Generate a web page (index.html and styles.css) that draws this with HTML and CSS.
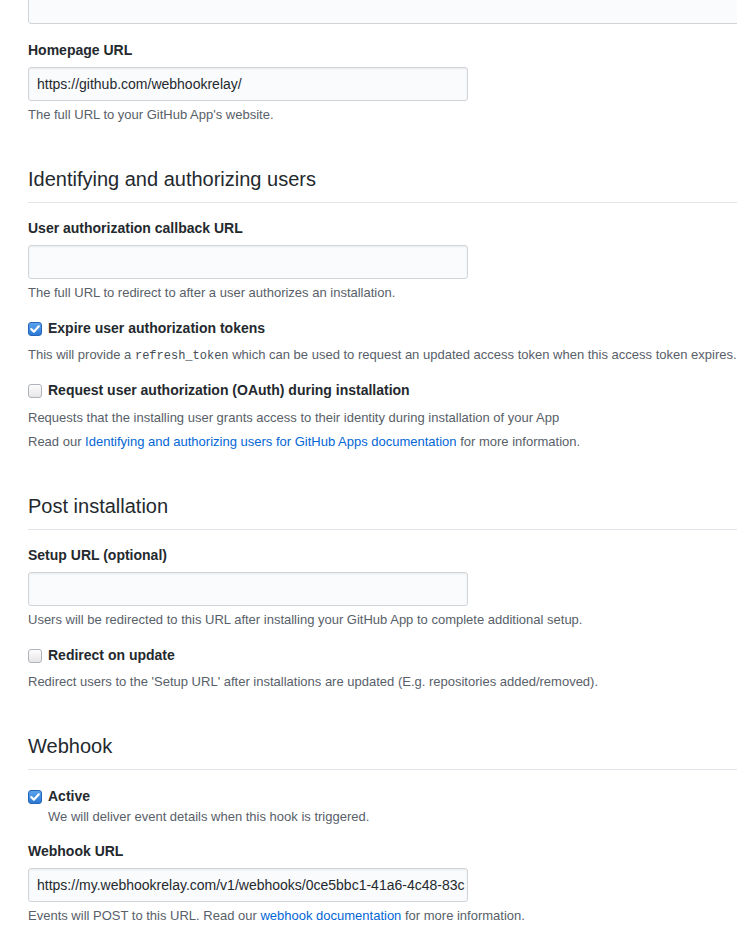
FILE: index.html
```html
<!DOCTYPE html>
<html lang="en">
<head>
<meta charset="utf-8">
<title>GitHub App settings</title>
<link rel="stylesheet" href="styles.css">
</head>
<body>
<div class="page">
  <div class="textarea-stub"></div>

  <div class="form-group first">
    <div class="label">Homepage URL</div>
    <div class="input">https://github.com/webhookrelay/</div>
    <p class="note">The full URL to your GitHub App's website.</p>
  </div>

  <h2 class="subhead">Identifying and authorizing users</h2>

  <div class="form-group">
    <div class="label">User authorization callback URL</div>
    <div class="input"></div>
    <p class="note">The full URL to redirect to after a user authorizes an installation.</p>
  </div>

  <div class="check-group">
    <div class="check-label"><span class="cb checked"><svg viewBox="0 0 14 14" width="14" height="14"><path d="M3.3 7.1 L5.9 9.7 L10.8 4.3" fill="none" stroke="#fff" stroke-width="2.2" stroke-linecap="round" stroke-linejoin="round"/></svg></span>Expire user authorization tokens</div>
    <p class="note">This will provide a <code>refresh_token</code> which can be used to request an updated access token when this access token expires.</p>
  </div>

  <div class="check-group stacked">
    <div class="check-label"><span class="cb"></span>Request user authorization (OAuth) during installation</div>
    <p class="note">Requests that the installing user grants access to their identity during installation of your App</p>
    <p class="note">Read our <a href="#">Identifying and authorizing users for GitHub Apps documentation</a> for more information.</p>
  </div>

  <h2 class="subhead">Post installation</h2>

  <div class="form-group">
    <div class="label">Setup URL (optional)</div>
    <div class="input"></div>
    <p class="note">Users will be redirected to this URL after installing your GitHub App to complete additional setup.</p>
  </div>

  <div class="check-group">
    <div class="check-label"><span class="cb"></span>Redirect on update</div>
    <p class="note">Redirect users to the 'Setup URL' after installations are updated (E.g. repositories added/removed).</p>
  </div>

  <h2 class="subhead">Webhook</h2>

  <div class="check-group tight">
    <div class="check-label"><span class="cb checked"><svg viewBox="0 0 14 14" width="14" height="14"><path d="M3.3 7.1 L5.9 9.7 L10.8 4.3" fill="none" stroke="#fff" stroke-width="2.2" stroke-linecap="round" stroke-linejoin="round"/></svg></span>Active</div>
    <p class="note indent">We will deliver event details when this hook is triggered.</p>
  </div>

  <div class="form-group after-check">
    <div class="label">Webhook URL</div>
    <div class="input">https://my.webhookrelay.com/v1/webhooks/0ce5bbc1-41a6-4c48-83c</div>
    <p class="note">Events will POST to this URL. Read our <a href="#">webhook documentation</a> for more information.</p>
  </div>
</div>
</body>
</html>
```

FILE: styles.css
```css
html, body {
  margin: 0;
  padding: 0;
  overflow: hidden;
  background: #fff;
}
body {
  font-family: "Liberation Sans", Arial, sans-serif;
  color: #24292e;
  font-size: 14px;
  line-height: 1.5;
}
.page {
  width: 760px;
  padding-left: 28px;
}
.textarea-stub {
  width: 760px;
  height: 60px;
  margin-top: -36px;
  box-sizing: border-box;
  background: #fafbfc;
  border: 1px solid #d1d5da;
  border-radius: 3px;
}
.form-group {
  margin-top: 15px;
}
.form-group.first {
  margin-top: 16px;
}
.form-group.after-check {
  margin-top: 14px;
}
.label {
  font-weight: bold;
  font-size: 14px;
  line-height: 21px;
  margin-bottom: 6px;
}
.input {
  width: 440px;
  height: 34px;
  box-sizing: border-box;
  background: #fafbfc;
  border: 1px solid #d1d5da;
  border-radius: 3px;
  box-shadow: inset 0 1px 2px rgba(27,31,35,0.075);
  padding: 0 0 0 8px;
  font-size: 14px;
  line-height: 32px;
  white-space: nowrap;
  overflow: hidden;
}
.note {
  margin: 4px 0 0;
  font-size: 13px;
  line-height: 20px;
  color: #586069;
  white-space: nowrap;
}
.note a {
  color: #0366d6;
  text-decoration: none;
}
.note code {
  font-family: "Liberation Mono", "DejaVu Sans Mono", monospace;
  font-size: 12px;
  color: #444d56;
}
.subhead {
  margin: 39px 0 0;
  font-size: 20px;
  font-weight: normal;
  line-height: 30px;
  padding-bottom: 8px;
  border-bottom: 1px solid #e1e4e8;
}
.check-group {
  margin-top: 15px;
}
.check-group.stacked {
  margin-top: 14px;
}
.subhead + .check-group {
  margin-top: 16px;
}
.check-label {
  display: flex;
  align-items: center;
  font-weight: bold;
  font-size: 14px;
  line-height: 21px;
}
.check-group .check-label + .note {
  margin-top: 6px;
}
.check-group.stacked .check-label + .note {
  margin-top: 7px;
}
.check-group .check-label + .note + .note {
  margin-top: 4px;
}
.check-group.tight .check-label + .note {
  margin-top: 0;
}
.note.indent {
  padding-left: 20px;
}
.cb {
  width: 14px;
  height: 14px;
  box-sizing: border-box;
  border: 1px solid #aeb3b9;
  border-radius: 3px;
  background: linear-gradient(#fdfdfd, #e6e6e6);
  margin-right: 6px;
  display: inline-flex;
  align-items: center;
  justify-content: center;
  flex: none;
}
.cb.checked {
  border-color: #2566b8;
  background: linear-gradient(#5aa2ec, #2b79d6);
}
.cb svg {
  display: block;
  margin: -1px;
}
```
